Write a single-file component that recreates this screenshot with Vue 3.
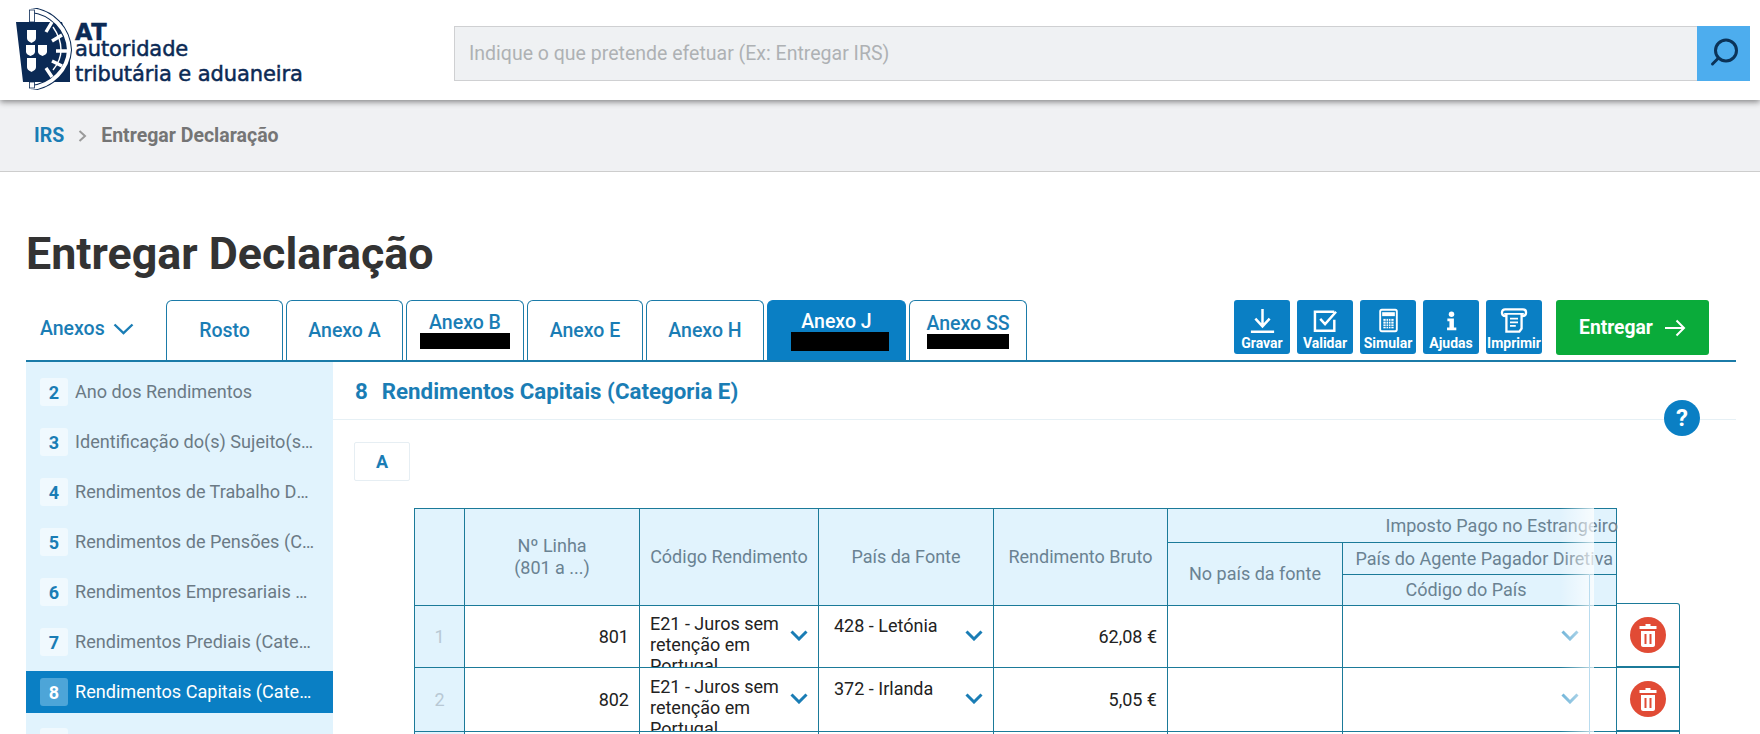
<template>
  <div class="page">
    <header class="topbar">
      <div class="logo">
        <svg class="crest" width="56" height="82" viewBox="0 0 56 82">
          <path d="M0 14 H46 L54 40 V74 H7 L4 48 Z" fill="#0b2a55" />
          <path d="M15 2 C36 4 52 21 53 42 C52 61 36 78 15 80" fill="none" stroke="#0b2a55" stroke-width="6" />
          <path d="M15 2 C36 4 52 21 53 42 C52 61 36 78 15 80" fill="none" stroke="#fff" stroke-width="4" />
          <path d="M36 14 L30 24 M46 27 L36 33 M51 43 L40 43 M46 58 L36 53 M36 69 L30 60" stroke="#fff" stroke-width="3.4" />
          <path d="M37 19 C42 26 45 33 45 42 C45 50 42 56 37 62" fill="none" stroke="#fff" stroke-width="1.4" />
          <rect x="13.5" y="2" width="5" height="12" fill="#fff" stroke="#0b2a55" stroke-width=".8" />
          <rect x="13.5" y="74" width="5" height="6" fill="#fff" stroke="#0b2a55" stroke-width=".8" />
          <g fill="#fff">
            <path d="M11 22 H20 V30 C20 33 17 34 15.5 35 C14 34 11 33 11 30 Z" />
            <path d="M10 37 H19 V44 C19 46 16.5 47 14.5 48 C12.5 47 10 46 10 44 Z" />
            <path d="M22 37 H31 V44 C31 46 28.5 47 26.5 48 C24.5 47 22 46 22 44 Z" />
            <path d="M11 50 H20 V59 C20 62 17 63 15.5 64 C14 63 11 62 11 59 Z" />
          </g>
        </svg>
        <div class="logo-text">
          <strong>AT</strong>
          <span>autoridade</span>
          <span>tributária e aduaneira</span>
        </div>
      </div>
      <div class="search">
        <input class="search-input" type="text" placeholder="Indique o que pretende efetuar (Ex: Entregar IRS)" />
        <button class="search-btn" aria-label="Pesquisar">
          <svg width="30" height="30" viewBox="0 0 30 30" fill="none" stroke="#0b3358" stroke-width="3" stroke-linecap="round">
            <circle cx="17" cy="12.5" r="10.5" />
            <line x1="9.5" y1="20" x2="3.5" y2="26" />
          </svg>
        </button>
      </div>
    </header>

    <nav class="crumbs">
      <a class="crumb-link">IRS</a>
      <svg width="9" height="12" viewBox="0 0 9 12" fill="none" stroke="#9a9a9a" stroke-width="2"><polyline points="1.5,1 7,6 1.5,11" /></svg>
      <span class="crumb-current">Entregar Declaração</span>
    </nav>

    <main class="main">
      <h1 class="title">Entregar Declaração</h1>

      <div class="tabbar">
        <div class="anexos">
          <span>Anexos</span>
          <svg width="21" height="12" viewBox="0 0 21 12" fill="none" stroke="#1a7db5" stroke-width="2.4"><polyline points="1.5,1.5 10.5,10 19.5,1.5" /></svg>
        </div>
        <div class="tabs">
          <div v-for="tab in tabs" :key="tab.name" :class="['tab', { active: tab.active }]" :style="{ width: tab.width + 'px' }">
            <span>{{ tab.name }}</span>
            <i v-if="tab.mask" class="mask" :style="{ width: tab.mask[0] + 'px', height: tab.mask[1] + 'px' }"></i>
          </div>
        </div>
        <div class="tools">
          <button class="tool">
            <svg width="25" height="25" viewBox="0 0 28 28" fill="none" stroke="#fff" stroke-width="2.8"><path d="M14 1 V20 M6 12 L14 20.5 L22 12" /><path d="M1 26.5 H27" /></svg>
            <span>Gravar</span>
          </button>
          <button class="tool">
            <svg width="25" height="22" viewBox="0 0 28 25" fill="none" stroke="#fff" stroke-width="2.8"><path d="M24 11 V23.5 H2 V2 H24" /><path d="M8 10 L13.5 16 L26 2" /></svg>
            <span>Validar</span>
          </button>
          <button class="tool">
            <svg width="19" height="25" viewBox="0 0 24 29">
              <rect x="1.5" y="1" width="21" height="27" rx="2" fill="none" stroke="#fff" stroke-width="2.4" />
              <rect x="4" y="4" width="16" height="5" fill="#fff" />
              <path d="M5 12 H19 V25 H5 Z M9 12 V25 M12 12 V25 M15 12 V25 M5 15.5 H19 M5 19 H19 M5 22 H19" fill="#fff" stroke="#0a7fc4" stroke-width="1" />
            </svg>
            <span>Simular</span>
          </button>
          <button class="tool">
            <svg width="11" height="22" viewBox="0 0 16 28" fill="#fff"><circle cx="8" cy="4" r="4" /><path d="M2 10.5 H11.5 V23.5 H15 V27.5 H1.5 V23.5 H5 V14.5 H2 Z" /></svg>
            <span>Ajudas</span>
          </button>
          <button class="tool">
            <svg width="28" height="25" viewBox="0 0 30 28" fill="none" stroke="#fff" stroke-width="2.6"><path d="M6 9 C2 9 1.5 7 1.5 5 C1.5 2.5 3 1.5 5 1.5 H25 C27 1.5 28.5 2.5 28.5 5 C28.5 7 28 9 24 9" /><path d="M4 6.5 H26" stroke-width="2" /><path d="M6.5 6.5 V26.5 H21 L23.5 23 V6.5" /><path d="M10.5 12 H19.5 M10.5 16 H19.5 M10.5 20 H17" stroke-width="2" /></svg>
            <span>Imprimir</span>
          </button>
          <button class="submit">
            <span>Entregar</span>
            <svg width="22" height="18" viewBox="0 0 22 18" fill="none" stroke="#fff" stroke-width="2"><path d="M1 9 H20 M12.5 1.5 L20 9 L12.5 16.5" /></svg>
          </button>
        </div>
      </div>

      <div class="content">
        <aside class="sidebar">
          <div v-for="item in sections" :key="item.num" :class="['side-item', { current: item.num === 8 }]">
            <b class="side-num">{{ item.num }}</b>
            <span class="side-label">{{ item.label }}</span>
          </div>
        </aside>

        <section class="panel">
          <div class="panel-head">
            <span>8</span>
            <span>Rendimentos Capitais (Categoria E)</span>
          </div>
          <button class="help">?</button>
          <button class="quadro">A</button>

          <div class="table-wrap">
            <div class="table-box">
              <table class="grid">
                <colgroup>
                  <col style="width: 50px" />
                  <col style="width: 175px" />
                  <col style="width: 179px" />
                  <col style="width: 175px" />
                  <col style="width: 174px" />
                  <col style="width: 175px" />
                  <col style="width: 274px" />
                </colgroup>
                <thead>
                  <tr class="h1">
                    <th rowspan="3"></th>
                    <th rowspan="3">Nº Linha<br />(801 a ...)</th>
                    <th rowspan="3">Código Rendimento</th>
                    <th rowspan="3">País da Fonte</th>
                    <th rowspan="3">Rendimento Bruto</th>
                    <th colspan="2" class="over"><div>Imposto Pago no Estrangeiro</div></th>
                  </tr>
                  <tr class="h2">
                    <th rowspan="2">No país da fonte</th>
                    <th class="agent"><div>País do Agente Pagador Diretiva</div></th>
                  </tr>
                  <tr class="h3">
                    <th class="code">Código do País</th>
                  </tr>
                </thead>
                <tbody>
                  <tr v-for="(row, i) in rows" :key="i">
                    <td class="idx">{{ i + 1 }}</td>
                    <td class="num">{{ row.linha }}</td>
                    <td class="pick">
                      <div class="pick-in">
                        <span class="pick-text">{{ row.codigo }}</span>
                        <svg v-if="row.codigo" class="chev" width="18" height="11" viewBox="0 0 18 11" fill="none" stroke="#1a7db5" stroke-width="3"><polyline points="1.5,1.5 9,9 16.5,1.5" /></svg>
                      </div>
                    </td>
                    <td class="pick">
                      <div class="pick-in">
                        <span class="pick-text country">{{ row.pais }}</span>
                        <svg v-if="row.pais" class="chev" width="18" height="11" viewBox="0 0 18 11" fill="none" stroke="#1a7db5" stroke-width="3"><polyline points="1.5,1.5 9,9 16.5,1.5" /></svg>
                      </div>
                    </td>
                    <td class="num">{{ row.bruto }}</td>
                    <td></td>
                    <td class="pick">
                      <div class="pick-in last">
                        <svg v-if="row.codigo" class="chev" width="18" height="11" viewBox="0 0 18 11" fill="none" stroke="#6db3d8" stroke-width="3"><polyline points="1.5,1.5 9,9 16.5,1.5" /></svg>
                      </div>
                    </td>
                  </tr>
                </tbody>
              </table>
              <div class="fade"></div>
            </div>

            <div class="actions">
              <div v-for="(row, i) in rows" :key="i" class="action">
                <button v-if="row.codigo" class="trash" aria-label="Apagar">
                  <svg width="18" height="23" viewBox="0 0 18 23" fill="#fff">
                    <path d="M6.5 0 H11.5 V2 H17.5 V5 H0.5 V2 H6.5 Z" />
                    <path d="M2 7 H16 V21 C16 22 15 23 14 23 H4 C3 23 2 22 2 21 Z M5.5 10 V20 H7.5 V10 Z M10.5 10 V20 H12.5 V10 Z" fill-rule="evenodd" />
                  </svg>
                </button>
              </div>
            </div>
          </div>
        </section>
      </div>
    </main>
  </div>
</template>

<script setup>
const tabs = [
  { name: 'Rosto', width: 117 },
  { name: 'Anexo A', width: 117 },
  { name: 'Anexo B', width: 118, mask: [90, 16] },
  { name: 'Anexo E', width: 116 },
  { name: 'Anexo H', width: 118 },
  { name: 'Anexo J', width: 139, active: true, mask: [98, 19] },
  { name: 'Anexo SS', width: 118, mask: [82, 15] }
]

const sections = [
  { num: 2, label: 'Ano dos Rendimentos' },
  { num: 3, label: 'Identificação do(s) Sujeito(s) Passivo(s)' },
  { num: 4, label: 'Rendimentos de Trabalho Dependente' },
  { num: 5, label: 'Rendimentos de Pensões (Categoria H)' },
  { num: 6, label: 'Rendimentos Empresariais e Profissionais' },
  { num: 7, label: 'Rendimentos Prediais (Categoria F)' },
  { num: 8, label: 'Rendimentos Capitais (Categoria E)' },
  { num: 9, label: 'Rendimentos de Incrementos' }
]

const rows = [
  { linha: '801', codigo: 'E21 - Juros sem retenção em Portugal', pais: '428 - Letónia', bruto: '62,08 €' },
  { linha: '802', codigo: 'E21 - Juros sem retenção em Portugal', pais: '372 - Irlanda', bruto: '5,05 €' },
  { linha: '', codigo: '', pais: '', bruto: '' }
]
</script>

<style>
html,
body {
  margin: 0;
  overflow: hidden;
  background: #fff;
}
</style>

<style scoped>
.page {
  height: 734px;
  overflow: hidden;
  font-family: Roboto, "Liberation Sans", sans-serif;
}

button {
  font-family: inherit;
  border: none;
  cursor: pointer;
}

.topbar {
  position: relative;
  z-index: 2;
  display: flex;
  align-items: center;
  height: 100px;
  padding: 0 10px 0 16px;
  background: #fff;
  box-shadow: 0 2px 6px rgba(0, 0, 0, 0.45);
  box-sizing: border-box;
}

.logo {
  display: flex;
  align-items: center;
  gap: 3px;
  width: 438px;
  color: #0b2a55;
}

.crest {
  flex: none;
  margin-top: -2px;
}

.logo-text {
  display: flex;
  flex-direction: column;
  padding-top: 14px;
  font-family: "DejaVu Sans", sans-serif;
  font-size: 21px;
  line-height: 25px;
  -webkit-text-stroke: 0.5px #0b2a55;
  letter-spacing: -0.1px;
  white-space: nowrap;
}

.logo-text strong {
  font-size: 22.5px;
  line-height: 10px;
  font-weight: 700;
  letter-spacing: 0.5px;
}

.search {
  flex: 1;
  display: flex;
  height: 55px;
  margin-top: 6px;
}

.search-input {
  flex: 1;
  padding: 0 14px;
  border: 1px solid #cfd0d2;
  border-right: none;
  background: #eff1f3;
  font-family: inherit;
  font-size: 19.5px;
  outline: none;
}

.search-input::placeholder {
  color: #aeb1b4;
  opacity: 1;
}

.search-btn {
  display: flex;
  align-items: center;
  justify-content: center;
  width: 53px;
  padding: 0;
  background: #4dadee;
}

.crumbs {
  display: flex;
  align-items: center;
  gap: 14px;
  height: 72px;
  padding-left: 34px;
  background: #f0f1f3;
  border-bottom: 1px solid #cdcdcd;
  box-sizing: border-box;
  font-size: 19.5px;
  font-weight: 700;
}

.crumb-link {
  color: #1a7db5;
}

.crumb-current {
  color: #757575;
}

.main {
  padding: 0 24px 0 26px;
}

.title {
  display: flex;
  align-items: center;
  height: 128px;
  margin: 0;
  padding-top: 34px;
  box-sizing: border-box;
  font-size: 44.8px;
  font-weight: 700;
  color: #333;
}

.tabbar {
  display: flex;
  height: 62px;
  border-bottom: 2px solid #1b7ba8;
  box-sizing: border-box;
}

.anexos {
  display: flex;
  align-items: center;
  gap: 8px;
  width: 140px;
  height: 60px;
  padding: 0 0 3px 14px;
  box-sizing: border-box;
  font-size: 19.5px;
  font-weight: 500;
  color: #1a7db5;
}

.tabs {
  display: flex;
  gap: 3px;
  height: 60px;
}

.tab {
  display: flex;
  flex-direction: column;
  align-items: center;
  justify-content: center;
  box-sizing: border-box;
  border: 1px solid #1b7ba8;
  border-bottom: none;
  border-radius: 6px 6px 0 0;
  font-size: 19.5px;
  font-weight: 500;
  line-height: 21px;
  color: #1a7db5;
}

.tab.active {
  background: #0a7fc4;
  border-color: #0a7fc4;
  color: #fff;
}

.tab.active .mask {
  margin-left: 7px;
}

.mask {
  display: block;
  background: #000;
}

.tools {
  display: flex;
  gap: 7px;
  margin-left: auto;
  margin-right: 27px;
}

.tool {
  display: flex;
  flex-direction: column;
  align-items: center;
  width: 56px;
  height: 54px;
  padding: 5px 0 4px;
  border-radius: 3px;
  background: #0a7fc4;
  color: #fff;
  font-size: 14px;
  font-weight: 700;
  line-height: 14px;
  white-space: nowrap;
  overflow: hidden;
}

.tool svg {
  flex: none;
  margin: auto 0;
}

.tool span {
  flex: none;
}

.submit {
  display: flex;
  align-items: center;
  justify-content: center;
  gap: 11px;
  width: 153px;
  height: 55px;
  margin-left: 7px;
  padding: 0;
  border-radius: 3px;
  background: #0aab3a;
  color: #fff;
  font-size: 19.3px;
  font-weight: 700;
}

.content {
  display: flex;
}

.sidebar {
  flex: none;
  width: 307px;
  height: 400px;
  padding-top: 9px;
  box-sizing: border-box;
  background: #e1f3fd;
}

.side-item {
  display: flex;
  align-items: center;
  gap: 7px;
  height: 42px;
  margin-bottom: 8px;
  padding-left: 14px;
  color: #6b7a85;
  font-size: 18.1px;
}

.side-item.current {
  background: #0a7fc4;
  color: #fff;
}

.side-num {
  flex: none;
  display: flex;
  align-items: center;
  justify-content: center;
  width: 28px;
  height: 28px;
  border-radius: 3px;
  background: #f0f9fe;
  color: #1a7db5;
  font-size: 18px;
  font-weight: 700;
}

.current .side-num {
  background: #4da5d8;
  color: #fff;
}

.side-label {
  width: 242px;
  padding-bottom: 2px;
  white-space: nowrap;
  overflow: hidden;
  text-overflow: ellipsis;
}

.panel {
  position: relative;
  flex: 1;
  min-width: 0;
}

.panel-head {
  display: flex;
  align-items: center;
  gap: 14px;
  height: 58px;
  padding-left: 22px;
  border-bottom: 1px solid #e6f0f5;
  box-sizing: border-box;
  font-size: 22.3px;
  font-weight: 700;
  color: #1a7db5;
}

.help {
  position: absolute;
  top: 38px;
  right: 36px;
  width: 36px;
  height: 36px;
  padding: 0;
  border-radius: 50%;
  background: #0a7fc4;
  color: #fff;
  font-size: 24px;
  font-weight: 700;
}

.quadro {
  display: block;
  width: 56px;
  height: 39px;
  margin: 22px 0 0 21px;
  padding: 0;
  border: 1px solid #e6eef3;
  border-radius: 2px;
  background: #fff;
  color: #1a7db5;
  font-size: 18px;
  font-weight: 700;
}

.table-wrap {
  display: flex;
  margin: 27px 0 0 81px;
}

.table-box {
  position: relative;
  flex: none;
  width: 1202px;
}

.grid {
  width: 1202px;
  table-layout: fixed;
  border-collapse: collapse;
  color: #222;
  font-size: 18px;
}

.grid th {
  padding: 0;
  border: 1px solid #1b7a99;
  background: #e1f3fd;
  color: #6a8292;
  font-weight: 400;
  line-height: 22px;
  text-align: center;
}

.grid thead tr:last-child th,
.grid th[rowspan="3"],
.grid th[rowspan="2"] {
  border-bottom: none;
}

.h1 {
  height: 34px;
}

.h2 {
  height: 32px;
}

.h3 {
  height: 31px;
}

.over div,
.agent div {
  display: flex;
  justify-content: flex-end;
  white-space: nowrap;
  overflow: hidden;
}

.over div {
  margin-right: -2px;
}

.agent div {
  padding-right: 3px;
}

.code {
  padding-right: 27px !important;
}

.grid td {
  height: 64px;
  padding: 0;
  border: 1px solid #1b7a99;
  box-sizing: border-box;
}

.grid tbody tr:first-child td {
  height: 62px;
}

.idx {
  background: #e1f3fd;
  color: #b8c8d4;
  text-align: center;
}

.num {
  padding-right: 10px !important;
  text-align: right;
}

.pick-in {
  display: flex;
  justify-content: space-between;
  height: 63px;
  padding: 8px 10px 0 10px;
  box-sizing: border-box;
  overflow: hidden;
}

.grid tbody tr:first-child .pick-in {
  height: 61px;
  padding-top: 7px;
}

.pick-text {
  width: 130px;
  line-height: 21px;
}

.pick-text.country {
  padding: 2px 0 0 5px;
}

.chev {
  flex: none;
  margin-top: 17px;
}

.pick-in.last {
  justify-content: flex-end;
  padding-right: 37px;
}

.fade {
  position: absolute;
  top: 0;
  bottom: 0;
  left: 1146px;
  width: 34px;
  background: linear-gradient(to right, rgba(255, 255, 255, 0), rgba(255, 255, 255, 0.75));
  pointer-events: none;
}

.fade::after {
  content: "";
  position: absolute;
  top: 66px;
  bottom: 0;
  right: 4px;
  width: 1px;
  background: #b9dcef;
}

.actions {
  margin-top: 95px;
}

.action {
  display: flex;
  align-items: center;
  justify-content: center;
  width: 64px;
  height: 64px;
  border: 1px solid #1b7a99;
  border-left: none;
  box-sizing: border-box;
}

.action:first-child {
  border-top-right-radius: 3px;
}

.trash {
  display: flex;
  align-items: center;
  justify-content: center;
  width: 36px;
  height: 36px;
  padding: 0;
  border-radius: 50%;
  background: #e14b35;
}
</style>
